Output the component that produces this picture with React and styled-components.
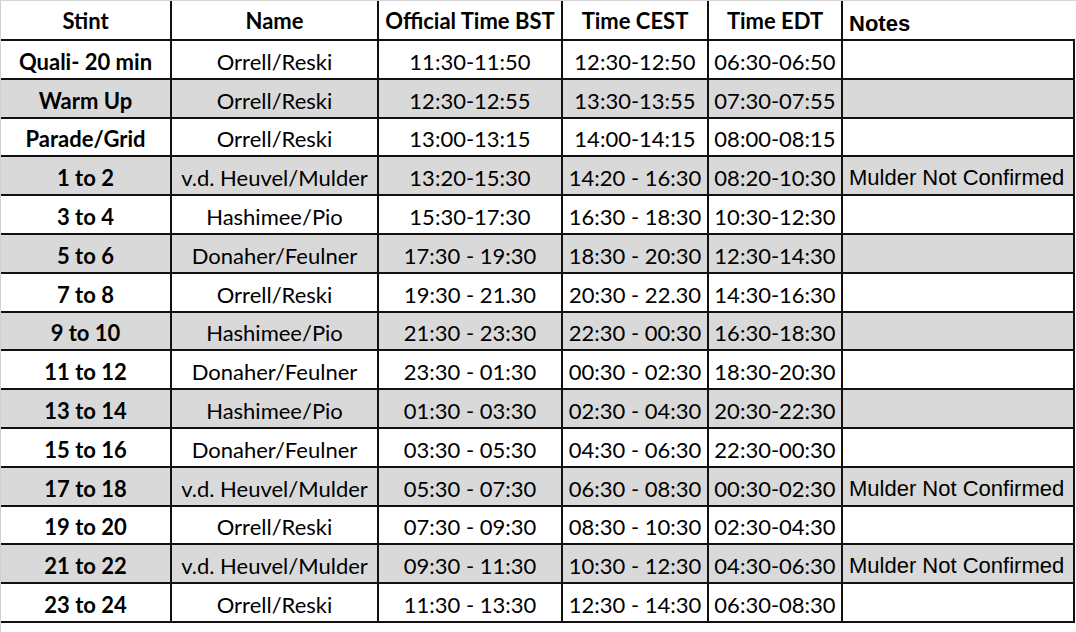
import React from "react";
import styled, { createGlobalStyle } from "styled-components";

const GlobalStyle = createGlobalStyle`
  html, body {
    margin: 0;
    padding: 0;
    background: #ffffff;
  }
`;

const Frame = styled.div`
  width: 1076px;
  height: 632px;
  box-sizing: border-box;
  border-top: 1px solid #d4d4d4;
  border-left: 1px solid #cfcfcf;
  overflow: hidden;
`;

const Sheet = styled.table`
  table-layout: fixed;
  border-collapse: collapse;
  width: 1073px;
  font-family: Lato, "Open Sans", sans-serif;
  font-size: 22px;
  color: #000;
`;

const HeadCell = styled.th`
  height: 36px;
  padding: 0 2px;
  font-weight: 700;
  text-align: ${(p) => (p.$left ? "left" : "center")};
  padding-left: ${(p) => (p.$left ? "6px" : "2px")};
  font-family: ${(p) => (p.$arial ? '"Liberation Sans", Arial, sans-serif' : 'Lato, "Open Sans", sans-serif')};
  font-size: 22px;
  vertical-align: ${(p) => (p.$left ? "bottom" : "middle")};
  padding-bottom: ${(p) => (p.$left ? "2px" : "0")};
  border-left: ${(p) => (p.$first ? "none" : "2px solid #111")};
  border-bottom: 2px solid #111;
  white-space: nowrap;
`;

const Row = styled.tr`
  height: 38.8px;
  background: ${(p) => (p.$shade ? "#d9d9d9" : "#ffffff")};
`;

const Cell = styled.td`
  padding: 4px 1px 0;
  text-align: center;
  font-weight: ${(p) => (p.$bold ? 700 : 400)};
  border: 2px solid #111;
  border-left: ${(p) => (p.$first ? "none" : "2px solid #111")};
  white-space: nowrap;
  overflow: hidden;
`;

const NoteCell = styled.td`
  padding: 5px 2px 0 6px;
  text-align: left;
  font-family: "Liberation Sans", Arial, sans-serif;
  font-size: 22px;
  border: 2px solid #111;
  white-space: nowrap;
  overflow: hidden;
`;

const columns = [
  { label: "Stint", width: 170 },
  { label: "Name", width: 207 },
  { label: "Official Time BST", width: 184 },
  { label: "Time CEST", width: 146 },
  { label: "Time EDT", width: 134 },
  { label: "Notes", width: 232 },
];

const NOTE = "Mulder Not Confirmed";

const rows = [
  ["Quali- 20 min", "Orrell/Reski", "11:30-11:50", "12:30-12:50", "06:30-06:50", ""],
  ["Warm Up", "Orrell/Reski", "12:30-12:55", "13:30-13:55", "07:30-07:55", ""],
  ["Parade/Grid", "Orrell/Reski", "13:00-13:15", "14:00-14:15", "08:00-08:15", ""],
  ["1 to 2", "v.d. Heuvel/Mulder", "13:20-15:30", "14:20 - 16:30", "08:20-10:30", NOTE],
  ["3 to 4", "Hashimee/Pio", "15:30-17:30", "16:30 - 18:30", "10:30-12:30", ""],
  ["5 to 6", "Donaher/Feulner", "17:30 - 19:30", "18:30 - 20:30", "12:30-14:30", ""],
  ["7  to 8", "Orrell/Reski", "19:30 - 21.30", "20:30 - 22.30", "14:30-16:30", ""],
  ["9 to 10", "Hashimee/Pio", "21:30 - 23:30", "22:30 - 00:30", "16:30-18:30", ""],
  ["11 to 12", "Donaher/Feulner", "23:30 - 01:30", "00:30 - 02:30", "18:30-20:30", ""],
  ["13 to 14", "Hashimee/Pio", "01:30 - 03:30", "02:30 - 04:30", "20:30-22:30", ""],
  ["15 to 16", "Donaher/Feulner", "03:30 - 05:30", "04:30 - 06:30", "22:30-00:30", ""],
  ["17 to 18", "v.d. Heuvel/Mulder", "05:30 - 07:30", "06:30 - 08:30", "00:30-02:30", NOTE],
  ["19 to 20", "Orrell/Reski", "07:30 - 09:30", "08:30 - 10:30", "02:30-04:30", ""],
  ["21 to 22", "v.d. Heuvel/Mulder", "09:30 - 11:30", "10:30 - 12:30", "04:30-06:30", NOTE],
  ["23 to 24", "Orrell/Reski", "11:30 - 13:30", "12:30 - 14:30", "06:30-08:30", ""],
];

export default function App() {
  return (
    <Frame>
      <GlobalStyle />
      <Sheet>
        <colgroup>
          {columns.map((c) => (
            <col key={c.label} style={{ width: c.width }} />
          ))}
        </colgroup>
        <thead>
          <tr>
            {columns.map((c, i) => (
              <HeadCell
                key={c.label}
                $first={i === 0}
                $left={c.label === "Notes"}
                $arial={c.label === "Notes"}
              >
                {c.label}
              </HeadCell>
            ))}
          </tr>
        </thead>
        <tbody>
          {rows.map((r, i) => (
            <Row key={r[0]} $shade={i % 2 === 1}>
              <Cell $first $bold>{r[0]}</Cell>
              <Cell>{r[1]}</Cell>
              <Cell>{r[2]}</Cell>
              <Cell>{r[3]}</Cell>
              <Cell>{r[4]}</Cell>
              <NoteCell>{r[5]}</NoteCell>
            </Row>
          ))}
        </tbody>
      </Sheet>
    </Frame>
  );
}
